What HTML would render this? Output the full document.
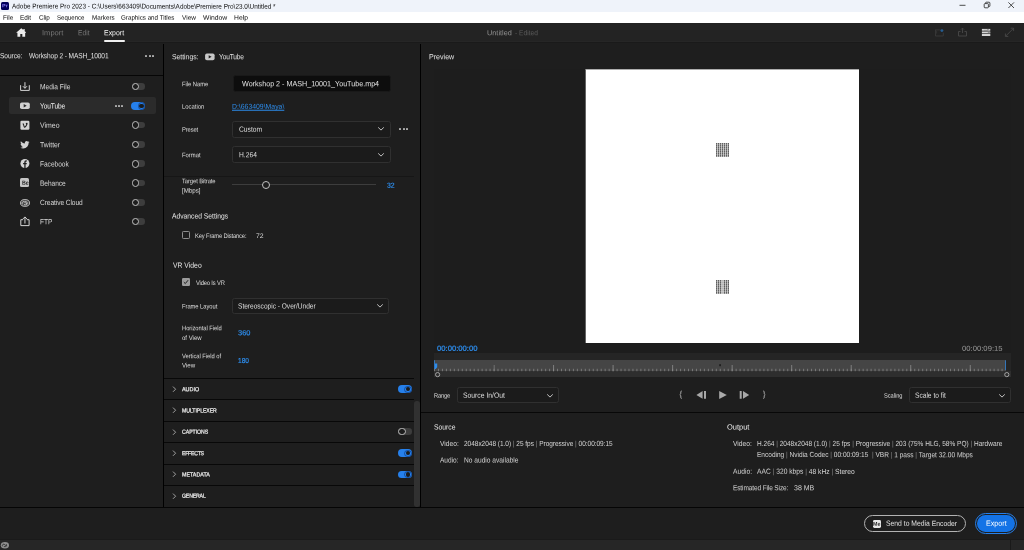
<!DOCTYPE html><html><head><meta charset="utf-8"><title>Adobe Premiere Pro 2023 - Export</title><style>
html,body{margin:0;padding:0;background:#1e1e1e;}
body{width:1024px;height:550px;overflow:hidden;position:relative;font-family:"Liberation Sans",sans-serif;}
.a{position:absolute;}
.t{position:absolute;white-space:pre;line-height:12px;height:12px;transform-origin:0 50%;}
.t i{font-style:normal;opacity:.55;}
.dd{position:absolute;box-sizing:border-box;border:1px solid #303030;border-radius:2.5px;background:#1b1b1b;}
#tx{position:absolute;left:0;top:0;width:1024px;height:550px;will-change:transform;}
.hl{position:absolute;height:1px;background:#080808;}
</style></head><body>
<!-- window chrome -->
<div class="a" style="left:0;top:0;width:1024px;height:12px;background:#eff3fa;"></div>
<div class="a" style="left:0;top:12px;width:1024px;height:11px;background:#ffffff;"></div>
<div class="a" style="left:0.75px;top:1.6px;width:8.35px;height:8.3px;background:#00005b;border-radius:1.5px;"></div>
<svg class="a" style="left:955px;top:0" width="69" height="12" viewBox="0 0 69 12">
<path d="M4.5 5.3h6" stroke="#222" stroke-width="0.8" fill="none"/>
<rect x="29.2" y="3.6" width="4.2" height="4.2" rx="0.8" stroke="#222" stroke-width="0.8" fill="none"/>
<path d="M30.6 3.4v-0.6q0-0.6 0.6-0.6h2.8q0.9 0 0.9 0.9v2.8q0 0.6-0.6 0.6h-0.6" stroke="#222" stroke-width="0.8" fill="none"/>
<path d="M53.4 2.4l5.6 5.6M59 2.4l-5.6 5.6" stroke="#222" stroke-width="0.8" fill="none"/>
</svg>
<!-- nav bar -->
<div class="a" style="left:0;top:23px;width:1024px;height:19px;background:#232323;"></div>
<div class="a" style="left:0;top:41px;width:1024px;height:1px;background:#262626;"></div><div class="a" style="left:0;top:42px;width:1024px;height:1px;background:#1a1a1a;"></div>
<div class="a" style="left:104.2px;top:40.3px;width:21.3px;height:1.6px;background:#f0f0f0;border-radius:1px;"></div>
<svg class="a" style="left:15.6px;top:28.4px" width="10.6" height="9" viewBox="0 0 26 22"><path d="M13 0.300L0.300 11.500h3.200V21.700h7v-7.200h5v7.200h7V11.500h3.200L21.300 7.800V2.300h-3.200v2.600z" fill="#ececec"/></svg>
<!-- panels -->
<div class="a" style="left:0;top:75px;width:163px;height:1px;background:#060606;"></div>
<div class="a" style="left:163px;top:44px;width:1px;height:464px;background:#000;"></div>
<div class="a" style="left:420px;top:44px;width:1px;height:464px;background:#000;"></div>
<div class="a" style="left:0;top:507px;width:1024px;height:1px;background:#050505;"></div>
<div class="a" style="left:0;top:539px;width:1024px;height:1px;background:#1a1a1a;"></div><div class="a" style="left:0;top:540px;width:1024px;height:10px;background:#262626;"></div>
<div class="a" style="left:1010.3px;top:540px;width:1px;height:10px;background:#1a1a1a;"></div>
<!-- selected row -->
<div class="a" style="left:9.3px;top:97.2px;width:146.7px;height:16.8px;background:#2b2b2b;border-radius:2px;"></div>
<!-- preview -->
<div class="a" style="left:433.5px;top:69px;width:577px;height:284px;background:#1d1d1d;"></div>
<div class="a" style="left:585px;top:69px;width:274px;height:274px;background:#767676;"></div><div class="a" style="left:586px;top:69px;width:273px;height:1px;background:#aeaeae;"></div><div class="a" style="left:585px;top:70px;width:1px;height:273px;background:#646464;"></div><div class="a" style="left:586px;top:70px;width:273px;height:273px;background:#ffffff;"></div>
<div class="a" style="left:715.5px;top:143.1px;width:13.8px;height:13.9px;background:repeating-linear-gradient(0deg,rgba(255,255,255,.22) 0,rgba(255,255,255,.22) 0.7px,rgba(255,255,255,0) 0.7px,rgba(255,255,255,0) 2px),repeating-linear-gradient(90deg,#606060 0,#606060 1.15px,#bcbcbc 1.15px,#bcbcbc 2px);"></div>
<div class="a" style="left:715.5px;top:279.6px;width:13.8px;height:14.1px;background:linear-gradient(90deg,rgba(255,255,255,0) 5.6px,rgba(255,255,255,.55) 5.6px,rgba(255,255,255,.55) 6.6px,rgba(255,255,255,0) 6.6px),repeating-linear-gradient(0deg,rgba(255,255,255,.22) 0,rgba(255,255,255,.22) 0.7px,rgba(255,255,255,0) 0.7px,rgba(255,255,255,0) 2px),repeating-linear-gradient(90deg,#606060 0,#606060 1.15px,#bcbcbc 1.15px,#bcbcbc 2px);"></div>
<!-- timeline -->
<div class="a" style="left:434px;top:353px;width:577px;height:24px;background:#252525;"></div>
<div class="a" style="left:434px;top:371px;width:577px;height:6px;background:#2e2e2e;"></div>
<div class="a" style="left:434px;top:360px;width:571.7px;height:11.2px;background:#454545;"></div>
<svg class="a" style="left:434px;top:360px" width="572" height="12" viewBox="0 0 572 12">
<defs><pattern id="mt" x="0" y="0" width="3.969" height="12" patternUnits="userSpaceOnUse"><rect x="0" y="8.8" width="0.8" height="2.4" fill="#848484"/></pattern>
<pattern id="MT" x="0" y="0" width="59.53" height="12" patternUnits="userSpaceOnUse"><rect x="0" y="5" width="0.8" height="6.2" fill="#8c8c8c"/></pattern></defs>
<rect x="0" y="0" width="571.4" height="12" fill="url(#mt)"/><rect x="59.53" y="0" width="512" height="12" fill="url(#MT)"/>
<rect x="285.2" y="4.2" width="1.8" height="2" fill="#1f1f1f"/>
</svg>
<svg class="a" style="left:432px;top:358px" width="10" height="24" viewBox="0 0 10 24">
<path d="M2.3 2.3h0.7v3.2h2.2v3.8l-1.5 1.6h-1.4z" fill="#2d8ceb"/>
<circle cx="5.6" cy="16.6" r="2.1" fill="none" stroke="#bdbdbd" stroke-width="0.8"/>
</svg>
<svg class="a" style="left:1000px;top:358px" width="12" height="24" viewBox="0 0 12 24">
<rect x="5.2" y="2.3" width="0.7" height="9.8" fill="#2d8ceb"/>
<circle cx="6.8" cy="16.6" r="2.1" fill="none" stroke="#bdbdbd" stroke-width="0.8"/>
</svg>
<!-- dropdowns -->
<div class="dd" style="left:232.2px;top:120.5px;width:158.6px;height:17.1px;"></div>
<div class="dd" style="left:232.2px;top:146.4px;width:158.6px;height:16.8px;"></div>
<div class="dd" style="left:231.8px;top:297.7px;width:157.6px;height:16.6px;"></div>
<div class="dd" style="left:457.2px;top:386.7px;width:101.6px;height:16.7px;"></div>
<div class="dd" style="left:908.6px;top:386.7px;width:102.3px;height:16.7px;"></div>
<div class="a" style="left:232.6px;top:75.4px;width:158px;height:16.5px;background:#0d0d0d;border-radius:2.5px;border:1px solid #191919;box-sizing:border-box;"></div>
<!-- lines -->
<div class="a" style="left:164px;top:175.6px;width:250px;height:1.4px;background:#161616;"></div>
<div class="hl" style="left:164px;top:378px;width:250px;"></div>
<div class="hl" style="left:164px;top:399px;width:250px;"></div>
<div class="hl" style="left:164px;top:421px;width:250px;"></div>
<div class="hl" style="left:164px;top:442px;width:250px;"></div>
<div class="hl" style="left:164px;top:464px;width:250px;"></div>
<div class="hl" style="left:164px;top:485px;width:250px;"></div>
<div class="hl" style="left:421px;top:412px;width:603px;"></div>
<div class="a" style="left:414.4px;top:400.5px;width:5.4px;height:106px;background:#313131;border-radius:2.7px;"></div>
<!-- dots -->
<div class="a" style="left:145.00px;top:54.70px;width:2.0px;height:2.0px;background:#acacac;margin-left:0.3px;border-radius:0.6px;"></div><div class="a" style="left:148.40px;top:54.70px;width:2.0px;height:2.0px;background:#acacac;margin-left:0.3px;border-radius:0.6px;"></div><div class="a" style="left:151.80px;top:54.70px;width:2.0px;height:2.0px;background:#acacac;margin-left:0.3px;border-radius:0.6px;"></div>
<div class="a" style="left:114.40px;top:105.00px;width:2.0px;height:2.0px;background:#acacac;margin-left:0.3px;border-radius:0.6px;"></div><div class="a" style="left:117.80px;top:105.00px;width:2.0px;height:2.0px;background:#acacac;margin-left:0.3px;border-radius:0.6px;"></div><div class="a" style="left:121.20px;top:105.00px;width:2.0px;height:2.0px;background:#acacac;margin-left:0.3px;border-radius:0.6px;"></div>
<div class="a" style="left:399.10px;top:128.20px;width:2.0px;height:2.0px;background:#acacac;margin-left:0.3px;border-radius:0.6px;"></div><div class="a" style="left:402.50px;top:128.20px;width:2.0px;height:2.0px;background:#acacac;margin-left:0.3px;border-radius:0.6px;"></div><div class="a" style="left:405.90px;top:128.20px;width:2.0px;height:2.0px;background:#acacac;margin-left:0.3px;border-radius:0.6px;"></div>
<!-- toggles -->
<div class="a" style="left:131.60px;top:83.60px;width:13.6px;height:6.6px;border-radius:3.3px;background:#3d3d3d;margin-top:-0.25px;"></div><div class="a" style="left:131.40px;top:83.00px;width:7.6px;height:7.6px;box-sizing:border-box;border:0.85px solid #bcbcbc;border-radius:50%;background:#1d1d1d;margin:-0.15px 0 0 0.2px;"></div>
<div class="a" style="left:131.40px;top:102.20px;width:14px;height:7.8px;border-radius:3.9px;background:#2680eb;"></div><div class="a" style="left:137.80px;top:102.40px;width:7.4px;height:7.4px;box-sizing:border-box;border:0.8px solid rgba(8,40,100,.55);border-radius:50%;"></div><div class="a" style="left:139.20px;top:103.80px;width:4.6px;height:4.6px;border-radius:50%;background:#1b1b1b;"></div>
<div class="a" style="left:131.60px;top:122.10px;width:13.6px;height:6.6px;border-radius:3.3px;background:#3d3d3d;margin-top:-0.25px;"></div><div class="a" style="left:131.40px;top:121.50px;width:7.6px;height:7.6px;box-sizing:border-box;border:0.85px solid #bcbcbc;border-radius:50%;background:#1d1d1d;margin:-0.15px 0 0 0.2px;"></div>
<div class="a" style="left:131.60px;top:141.40px;width:13.6px;height:6.6px;border-radius:3.3px;background:#3d3d3d;margin-top:-0.25px;"></div><div class="a" style="left:131.40px;top:140.80px;width:7.6px;height:7.6px;box-sizing:border-box;border:0.85px solid #bcbcbc;border-radius:50%;background:#1d1d1d;margin:-0.15px 0 0 0.2px;"></div>
<div class="a" style="left:131.60px;top:160.70px;width:13.6px;height:6.6px;border-radius:3.3px;background:#3d3d3d;margin-top:-0.25px;"></div><div class="a" style="left:131.40px;top:160.10px;width:7.6px;height:7.6px;box-sizing:border-box;border:0.85px solid #bcbcbc;border-radius:50%;background:#1d1d1d;margin:-0.15px 0 0 0.2px;"></div>
<div class="a" style="left:131.60px;top:180.00px;width:13.6px;height:6.6px;border-radius:3.3px;background:#3d3d3d;margin-top:-0.25px;"></div><div class="a" style="left:131.40px;top:179.40px;width:7.6px;height:7.6px;box-sizing:border-box;border:0.85px solid #bcbcbc;border-radius:50%;background:#1d1d1d;margin:-0.15px 0 0 0.2px;"></div>
<div class="a" style="left:131.60px;top:199.30px;width:13.6px;height:6.6px;border-radius:3.3px;background:#3d3d3d;margin-top:-0.25px;"></div><div class="a" style="left:131.40px;top:198.70px;width:7.6px;height:7.6px;box-sizing:border-box;border:0.85px solid #bcbcbc;border-radius:50%;background:#1d1d1d;margin:-0.15px 0 0 0.2px;"></div>
<div class="a" style="left:131.60px;top:218.50px;width:13.6px;height:6.6px;border-radius:3.3px;background:#3d3d3d;margin-top:-0.25px;"></div><div class="a" style="left:131.40px;top:217.90px;width:7.6px;height:7.6px;box-sizing:border-box;border:0.85px solid #bcbcbc;border-radius:50%;background:#1d1d1d;margin:-0.15px 0 0 0.2px;"></div>
<div class="a" style="left:398.00px;top:385.30px;width:14px;height:7.8px;border-radius:3.9px;background:#2680eb;"></div><div class="a" style="left:404.40px;top:385.50px;width:7.4px;height:7.4px;box-sizing:border-box;border:0.8px solid rgba(8,40,100,.55);border-radius:50%;"></div><div class="a" style="left:405.80px;top:386.90px;width:4.6px;height:4.6px;border-radius:50%;background:#1b1b1b;"></div>
<div class="a" style="left:398.20px;top:428.60px;width:13.6px;height:6.6px;border-radius:3.3px;background:#3d3d3d;margin-top:-0.25px;"></div><div class="a" style="left:398.00px;top:428.00px;width:7.6px;height:7.6px;box-sizing:border-box;border:0.85px solid #bcbcbc;border-radius:50%;background:#1d1d1d;margin:-0.15px 0 0 0.2px;"></div>
<div class="a" style="left:398.00px;top:449.30px;width:14px;height:7.8px;border-radius:3.9px;background:#2680eb;"></div><div class="a" style="left:404.40px;top:449.50px;width:7.4px;height:7.4px;box-sizing:border-box;border:0.8px solid rgba(8,40,100,.55);border-radius:50%;"></div><div class="a" style="left:405.80px;top:450.90px;width:4.6px;height:4.6px;border-radius:50%;background:#1b1b1b;"></div>
<div class="a" style="left:398.00px;top:470.60px;width:14px;height:7.8px;border-radius:3.9px;background:#2680eb;"></div><div class="a" style="left:404.40px;top:470.80px;width:7.4px;height:7.4px;box-sizing:border-box;border:0.8px solid rgba(8,40,100,.55);border-radius:50%;"></div><div class="a" style="left:405.80px;top:472.20px;width:4.6px;height:4.6px;border-radius:50%;background:#1b1b1b;"></div>
<!-- chevrons -->
<svg class="a" style="left:377.00px;top:126.40px" width="8" height="6" viewBox="0 0 8 6"><path d="M1.2 1.4L4 4.1L6.8 1.4" fill="none" stroke="#cacaca" stroke-width="0.95"/></svg>
<svg class="a" style="left:377.00px;top:152.10px" width="8" height="6" viewBox="0 0 8 6"><path d="M1.2 1.4L4 4.1L6.8 1.4" fill="none" stroke="#cacaca" stroke-width="0.95"/></svg>
<svg class="a" style="left:376.00px;top:303.30px" width="8" height="6" viewBox="0 0 8 6"><path d="M1.2 1.4L4 4.1L6.8 1.4" fill="none" stroke="#cacaca" stroke-width="0.95"/></svg>
<svg class="a" style="left:545.50px;top:392.50px" width="8" height="6" viewBox="0 0 8 6"><path d="M1.2 1.4L4 4.1L6.8 1.4" fill="none" stroke="#cacaca" stroke-width="0.95"/></svg>
<svg class="a" style="left:997.50px;top:392.50px" width="8" height="6" viewBox="0 0 8 6"><path d="M1.2 1.4L4 4.1L6.8 1.4" fill="none" stroke="#cacaca" stroke-width="0.95"/></svg>
<svg class="a" style="left:172px;top:385.10px" width="5" height="8" viewBox="0 0 5 8"><path d="M1 1.6L3.6 4.2L1 6.8" fill="none" stroke="#a8a8a8" stroke-width="0.95"/></svg>
<svg class="a" style="left:172px;top:406.40px" width="5" height="8" viewBox="0 0 5 8"><path d="M1 1.6L3.6 4.2L1 6.8" fill="none" stroke="#a8a8a8" stroke-width="0.95"/></svg>
<svg class="a" style="left:172px;top:427.70px" width="5" height="8" viewBox="0 0 5 8"><path d="M1 1.6L3.6 4.2L1 6.8" fill="none" stroke="#a8a8a8" stroke-width="0.95"/></svg>
<svg class="a" style="left:172px;top:449.10px" width="5" height="8" viewBox="0 0 5 8"><path d="M1 1.6L3.6 4.2L1 6.8" fill="none" stroke="#a8a8a8" stroke-width="0.95"/></svg>
<svg class="a" style="left:172px;top:470.40px" width="5" height="8" viewBox="0 0 5 8"><path d="M1 1.6L3.6 4.2L1 6.8" fill="none" stroke="#a8a8a8" stroke-width="0.95"/></svg>
<svg class="a" style="left:172px;top:491.70px" width="5" height="8" viewBox="0 0 5 8"><path d="M1 1.6L3.6 4.2L1 6.8" fill="none" stroke="#a8a8a8" stroke-width="0.95"/></svg>
<div class="a" style="left:182px;top:231.1px;width:7.8px;height:7.8px;box-sizing:border-box;border:0.9px solid #8e8e8e;border-radius:1.3px;"></div>
<div class="a" style="left:182px;top:278px;width:7.8px;height:7.9px;border-radius:1.2px;background:#9c9c9c;"></div>
<svg class="a" style="left:182px;top:278px" width="7.8" height="7.9" viewBox="0 0 7.8 7.9"><path d="M1.8 4.1L3.3 5.6L6.1 2.2" fill="none" stroke="#1d1d1d" stroke-width="1"/></svg>
<div class="a" style="left:231.5px;top:184.2px;width:144.3px;height:0.9px;background:#3d3d3d;"></div>
<div class="a" style="left:261.8px;top:181.1px;width:8px;height:8px;box-sizing:border-box;border:0.9px solid #c2c2c2;border-radius:50%;background:#1e1e1e;"></div>
<!-- list icons -->
<svg class="a" style="left:19px;top:81.4px" width="12" height="11" viewBox="0 0 12 11"><path d="M1.6 4.2v5.2h8.7V4.2" fill="none" stroke="#d4d4d4" stroke-width="1"/><path d="M5.95 1.2v6M3.9 5.2l2.05 2.1L8 5.2" fill="none" stroke="#d4d4d4" stroke-width="1"/></svg>
<svg class="a" style="left:19px;top:101px" width="12" height="10" viewBox="0 0 12 10"><rect x="1" y="1.5" width="9.8" height="6.5" rx="1.8" fill="#d2d2d2"/><path d="M4.7 3.1v3.3l3-1.65z" fill="#2b2b2b"/></svg>
<svg class="a" style="left:19px;top:119px" width="12" height="12" viewBox="0 0 12 12"><rect x="1.4" y="1.7" width="9" height="9" rx="1.2" fill="#d4d4d4"/><path d="M3.3 4.9l0.9-0.6q0.7 0 1 1.6q0.3 1.5 0.6 1.5q0.5 0 1.3-1.7q0.3-0.9-0.5-0.7q0.4-1.4 1.5-1.3q0.9 0.1 0.3 1.7q-1.1 2.6-2.6 3.3q-1 0.3-1.4-1.6q-0.3-1.7-0.6-1.9z" fill="#1e1e1e"/></svg>
<svg class="a" style="left:19px;top:139px" width="12" height="11" viewBox="0 0 12 11"><path d="M10.4 3.0c-0.3 0.2-0.7 0.3-1 0.3c0.4-0.2 0.6-0.6 0.8-1c-0.4 0.2-0.7 0.3-1.2 0.4c-0.3-0.4-0.8-0.6-1.3-0.6c-1 0-1.9 0.9-1.9 1.9c0 0.1 0 0.3 0 0.4C4.200 4.300 2.800 3.500 1.900 2.300c-0.200 0.300-0.300 0.600-0.300 1.000c0 0.700 0.300 1.200 0.800 1.600c-0.300 0-0.600-0.100-0.800-0.200c0 0.900 0.600 1.700 1.500 1.900c-0.300 0.100-0.600 0.100-0.900 0c0.200 0.800 1.000 1.300 1.800 1.300c-0.700 0.600-1.700 0.900-2.700 0.800c0.800 0.500 1.800 0.800 2.900 0.800c3.500 0 5.400-2.900 5.400-5.400v-0.200c0.400-0.300 0.700-0.600 0.900-1z" fill="#d4d4d4"/></svg>
<svg class="a" style="left:19px;top:158px" width="12" height="11" viewBox="0 0 12 11"><circle cx="5.9" cy="5.5" r="4.5" fill="#d4d4d4"/><path d="M5.3 10V6.300H4.100V4.900H5.300V3.900q0-1.600 1.700-1.600l0.900 0.100V3.600H7.300q-0.700 0-0.700 0.600V4.900H7.800L7.600 6.300H6.600V10z" fill="#1e1e1e"/></svg>
<div class="a" style="left:20.4px;top:178.2px;width:9px;height:8.9px;background:#c6c6c6;border-radius:1.5px;"></div>
<svg class="a" style="left:19px;top:197px" width="13" height="12" viewBox="0 0 13 12"><ellipse cx="6" cy="5.95" rx="4.55" ry="3.4" fill="#4a4a4a" stroke="#c4c4c4" stroke-width="0.9"/><path d="M3.4 7.3q-1.100-1.500 0.400-2.500q1.200-0.600 2.200 0.400l1.900 1.900M5 7.600q1.700 0.700 2.900-0.400q0.900-1.300-0.300-2.400q-0.800-0.600-1.700-0.300" fill="none" stroke="#d0d0d0" stroke-width="0.85"/></svg>
<svg class="a" style="left:19px;top:215px" width="12" height="12" viewBox="0 0 12 12"><path d="M4.100 4.700H1.800v5.900h8.300V4.700H7.800" fill="none" stroke="#d4d4d4" stroke-width="1"/><path d="M5.950 8.500V2.200M4 3.900l1.950-2L7.900 3.900" fill="none" stroke="#d4d4d4" stroke-width="1"/></svg>
<!-- settings header youtube icon -->
<svg class="a" style="left:203.600px;top:52px" width="12" height="10" viewBox="0 0 12 10"><rect x="1.100" y="1.500" width="9.500" height="6.700" rx="1.800" fill="#c8c8c8"/><path d="M4.700 3.200v3.300l2.900-1.650z" fill="#1e1e1e"/></svg>
<!-- nav right icons -->
<svg class="a" style="left:933px;top:26px" width="84" height="13" viewBox="0 0 84 13">
<path d="M2.500 3.900h4.300M10.300 6.600v3.400h-7.800v-6.400" fill="none" stroke="#3a3a3a" stroke-width="0.900"/><rect x="2.900" y="4.600" width="1.200" height="3" fill="#303030"/><circle cx="8.900" cy="4.600" r="1.450" fill="#265d91"/>
<path d="M27.500 5.500h-2v4.500h8V5.500h-2" fill="none" stroke="#484848" stroke-width="0.900"/><path d="M29.500 7V2.200M28 3.600l1.500-1.500L31 3.600" fill="none" stroke="#484848" stroke-width="0.900"/>
<rect x="48.900" y="2.900" width="8.400" height="1.800" fill="#d4d4d4"/><rect x="48.900" y="5.500" width="8.400" height="1.700" fill="#d4d4d4"/><rect x="48.900" y="7.800" width="8.400" height="2.200" fill="#d4d4d4"/><rect x="54.500" y="2.900" width="1" height="0.800" fill="#444"/><rect x="51" y="3.900" width="4" height="0.500" fill="#777"/><rect x="54.800" y="6.100" width="2" height="0.600" fill="#666"/>
<path d="M72.500 10.300l8-8M77.700 2.200h2.900v2.900M72.400 7.500v2.900h2.900" fill="none" stroke="#484848" stroke-width="0.900"/>
</svg>
<!-- transport -->
<svg class="a" style="left:676px;top:388px" width="94" height="14" viewBox="0 0 94 14">
<path d="M5.900 3.100h-0.500q-0.600 0-0.600 0.600v2.100l-1 0.900l1 0.900v2.100q0 0.600 0.600 0.600h0.500" fill="none" stroke="#a6a6a6" stroke-width="1" stroke-linejoin="miter"/>
<path d="M26.600 3v7.800L20.400 6.900zM28 3.100h2v7.700h-2z" fill="#a8a8a8"/>
<path d="M43.200 2.900v8l7.600-4z" fill="#aaaaaa"/>
<path d="M63.700 3.100h2v7.700h-2zM67 3v7.800l6.200-3.900z" fill="#a8a8a8"/>
<path d="M87.100 3.100h0.500q0.600 0 0.600 0.600v2.100l1 0.900l-1 0.900v2.100q0 0.600-0.600 0.600h-0.500" fill="none" stroke="#a6a6a6" stroke-width="1" stroke-linejoin="miter"/>
</svg>
<!-- bottom buttons -->
<div class="a" style="left:863.700px;top:515px;width:102.300px;height:17.200px;box-sizing:border-box;border:1px solid #b2b2b2;border-radius:9px;"></div>
<div class="a" style="left:872.600px;top:519.800px;width:8.800px;height:7.800px;background:#e8e8e8;border-radius:1.400px;"></div>
<div class="a" style="left:974.800px;top:512.800px;width:42.300px;height:21.600px;box-sizing:border-box;border:0.900px solid #2680eb;border-radius:11px;"></div>
<div class="a" style="left:976.700px;top:514.700px;width:38.600px;height:17.800px;background:#1473e6;border-radius:9px;"></div>
<!-- status icon -->
<svg class="a" style="left:0px;top:540px" width="11" height="10" viewBox="0 0 11 10"><ellipse cx="4.9" cy="5.2" rx="4.1" ry="3.3" fill="#8e8e8e"/><path d="M2.600 6.300q-0.800-1.200 0.400-2q1-0.500 1.800 0.300l1.600 1.600M3.900 6.500q1.400 0.600 2.500-0.400q0.700-1.100-0.300-2" fill="none" stroke="#2a2a2a" stroke-width="0.800"/></svg>

<div id="tx">
<span class="t" id="t0" style="left:12.30px;top:0px;font-size:7.00px;color:#0c0c0c;transform:translateY(0.55px) scaleX(0.9142) rotate(0.03deg);">Adobe Premiere Pro 2023 - C:\Users\663409\Documents\Adobe\Premiere Pro\23.0\Untitled *</span>
<span class="t" id="t1" style="left:3.10px;top:11px;font-size:6.60px;color:#0a0a0a;transform:translateY(0.70px) scaleX(0.9600) rotate(0.03deg);">File</span>
<span class="t" id="t2" style="left:20.20px;top:11px;font-size:6.60px;color:#0a0a0a;transform:translateY(0.70px) scaleX(0.9758) rotate(0.03deg);">Edit</span>
<span class="t" id="t3" style="left:38.70px;top:11px;font-size:6.60px;color:#0a0a0a;transform:translateY(0.70px) scaleX(0.9508) rotate(0.03deg);">Clip</span>
<span class="t" id="t4" style="left:56.90px;top:11px;font-size:6.60px;color:#0a0a0a;transform:translateY(0.70px) scaleX(0.9258) rotate(0.03deg);">Sequence</span>
<span class="t" id="t5" style="left:91.60px;top:11px;font-size:6.60px;color:#0a0a0a;transform:translateY(0.70px) scaleX(0.9491) rotate(0.03deg);">Markers</span>
<span class="t" id="t6" style="left:121.40px;top:11px;font-size:6.60px;color:#0a0a0a;transform:translateY(0.70px) scaleX(0.9441) rotate(0.03deg);">Graphics and Titles</span>
<span class="t" id="t7" style="left:181.70px;top:11px;font-size:6.60px;color:#0a0a0a;transform:translateY(0.70px) scaleX(0.9797) rotate(0.03deg);">View</span>
<span class="t" id="t8" style="left:202.50px;top:11px;font-size:6.60px;color:#0a0a0a;transform:translateY(0.70px) scaleX(1.0318) rotate(0.03deg);">Window</span>
<span class="t" id="t9" style="left:233.60px;top:11px;font-size:6.60px;color:#0a0a0a;transform:translateY(0.70px) scaleX(1.0249) rotate(0.03deg);">Help</span>
<span class="t" id="t10" style="left:42.40px;top:27px;font-size:7.50px;color:#767676;transform:translateY(0.15px) scaleX(1.0063) rotate(0.03deg);">Import</span>
<span class="t" id="t11" style="left:78.30px;top:27px;font-size:7.50px;color:#767676;transform:translateY(0.15px) scaleX(0.8966) rotate(0.03deg);">Edit</span>
<span class="t" id="t12" style="left:104.40px;top:27px;font-size:7.50px;color:#f2f2f2;transform:translateY(0.15px) scaleX(0.9268) rotate(0.03deg);">Export</span>
<span class="t" id="t13" style="left:486.50px;top:27px;font-size:7.30px;color:#929292;transform:translateY(0.30px) scaleX(1.0020) rotate(0.03deg);">Untitled</span>
<span class="t" id="t14" style="left:514.80px;top:27px;font-size:7.30px;color:#5c5c5c;transform:translateY(0.30px) scaleX(0.9103) rotate(0.03deg);">- Edited</span>
<span class="t" id="t15" style="left:0.45px;top:50px;font-size:7.50px;color:#e4e4e4;letter-spacing:-0.058px;transform:translateY(0.25px) scaleX(0.8800) rotate(0.03deg);">Source:</span>
<span class="t" id="t16" style="left:29.10px;top:50px;font-size:7.50px;color:#e4e4e4;letter-spacing:-0.127px;transform:translateY(0.25px) scaleX(0.8800) rotate(0.03deg);">Workshop 2 - MASH_10001</span>
<span class="t" id="t17" style="left:172.10px;top:51px;font-size:7.50px;color:#e4e4e4;transform:translateY(0.25px) scaleX(0.9079) rotate(0.03deg);">Settings:</span>
<span class="t" id="t18" style="left:219.30px;top:51px;font-size:7.50px;color:#e4e4e4;letter-spacing:-0.179px;transform:translateY(0.25px) scaleX(0.8800) rotate(0.03deg);">YouTube</span>
<span class="t" id="t19" style="left:429.40px;top:51px;font-size:7.50px;color:#e4e4e4;transform:translateY(0.25px) scaleX(0.9443) rotate(0.03deg);">Preview</span>
<span class="t" id="t20" style="left:39.90px;top:81px;font-size:7.50px;color:#d8d8d8;letter-spacing:-0.007px;transform:translateY(0.15px) scaleX(0.8800) rotate(0.03deg);">Media File</span>
<span class="t" id="t21" style="left:39.90px;top:100px;font-size:7.50px;color:#f4f4f4;letter-spacing:-0.141px;transform:translateY(0.45px) scaleX(0.8800) rotate(0.03deg);">YouTube</span>
<span class="t" id="t22" style="left:39.90px;top:119px;font-size:7.50px;color:#d8d8d8;transform:translateY(0.75px) scaleX(0.9278) rotate(0.03deg);">Vimeo</span>
<span class="t" id="t23" style="left:39.90px;top:139px;font-size:7.50px;color:#d8d8d8;transform:translateY(0.35px) scaleX(0.9098) rotate(0.03deg);">Twitter</span>
<span class="t" id="t24" style="left:39.90px;top:158px;font-size:7.50px;color:#d8d8d8;letter-spacing:-0.046px;transform:translateY(0.45px) scaleX(0.8800) rotate(0.03deg);">Facebook</span>
<span class="t" id="t25" style="left:39.90px;top:177px;font-size:7.50px;color:#d8d8d8;letter-spacing:-0.067px;transform:translateY(0.75px) scaleX(0.8800) rotate(0.03deg);">Behance</span>
<span class="t" id="t26" style="left:39.90px;top:197px;font-size:7.50px;color:#d8d8d8;letter-spacing:-0.084px;transform:translateY(0.05px) scaleX(0.8800) rotate(0.03deg);">Creative Cloud</span>
<span class="t" id="t27" style="left:39.90px;top:216px;font-size:7.50px;color:#d8d8d8;letter-spacing:-0.040px;transform:translateY(0.15px) scaleX(0.8800) rotate(0.03deg);">FTP</span>
<span class="t" id="t28" style="left:181.70px;top:78px;font-size:6.60px;color:#dedede;letter-spacing:-0.034px;transform:translateY(0.15px) scaleX(0.8800) rotate(0.03deg);">File Name</span>
<span class="t" id="t29" style="left:181.70px;top:100px;font-size:6.60px;color:#dedede;transform:translateY(0.75px) scaleX(0.8982) rotate(0.03deg);">Location</span>
<span class="t" id="t30" style="left:181.70px;top:123px;font-size:6.60px;color:#dedede;letter-spacing:-0.131px;transform:translateY(0.75px) scaleX(0.8800) rotate(0.03deg);">Preset</span>
<span class="t" id="t31" style="left:181.70px;top:149px;font-size:6.60px;color:#dedede;transform:translateY(0.35px) scaleX(0.8904) rotate(0.03deg);">Format</span>
<span class="t" id="t32" style="left:181.70px;top:175px;font-size:6.60px;color:#dedede;letter-spacing:-0.080px;transform:translateY(0.25px) scaleX(0.8800) rotate(0.03deg);">Target Bitrate</span>
<span class="t" id="t33" style="left:181.70px;top:184px;font-size:6.60px;color:#dedede;transform:translateY(0.75px) scaleX(0.9395) rotate(0.03deg);">[Mbps]</span>
<span class="t" id="t34" style="left:195.40px;top:229px;font-size:6.60px;color:#dedede;letter-spacing:-0.169px;transform:translateY(0.95px) scaleX(0.8800) rotate(0.03deg);">Key Frame Distance:</span>
<span class="t" id="t35" style="left:255.50px;top:229px;font-size:6.60px;color:#dedede;transform:translateY(0.95px) scaleX(1.0349) rotate(0.03deg);">72</span>
<span class="t" id="t36" style="left:195.60px;top:276px;font-size:6.60px;color:#dedede;letter-spacing:-0.186px;transform:translateY(0.95px) scaleX(0.8800) rotate(0.03deg);">Video Is VR</span>
<span class="t" id="t37" style="left:181.70px;top:300px;font-size:6.60px;color:#dedede;letter-spacing:-0.052px;transform:translateY(0.55px) scaleX(0.8800) rotate(0.03deg);">Frame Layout</span>
<span class="t" id="t38" style="left:181.70px;top:322px;font-size:6.60px;color:#dedede;letter-spacing:-0.039px;transform:translateY(0.35px) scaleX(0.8800) rotate(0.03deg);">Horizontal Field</span>
<span class="t" id="t39" style="left:181.70px;top:331px;font-size:6.60px;color:#dedede;transform:translateY(0.95px) scaleX(0.9110) rotate(0.03deg);">of View</span>
<span class="t" id="t40" style="left:181.70px;top:350px;font-size:6.60px;color:#dedede;letter-spacing:-0.040px;transform:translateY(0.25px) scaleX(0.8800) rotate(0.03deg);">Vertical Field of</span>
<span class="t" id="t41" style="left:181.70px;top:359px;font-size:6.60px;color:#dedede;transform:translateY(0.55px) scaleX(0.9304) rotate(0.03deg);">View</span>
<span class="t" id="t42" style="left:172.10px;top:210px;font-size:7.50px;color:#e8e8e8;transform:translateY(0.55px) scaleX(0.8985) rotate(0.03deg);">Advanced Settings</span>
<span class="t" id="t43" style="left:172.50px;top:259px;font-size:7.50px;color:#e8e8e8;transform:translateY(0.65px) scaleX(0.9093) rotate(0.03deg);">VR Video</span>
<span class="t" id="t44" style="left:241.70px;top:78px;font-size:7.60px;color:#e4e4e4;transform:translateY(0.15px) scaleX(0.9432) rotate(0.03deg);">Workshop 2 - MASH_10001_YouTube.mp4</span>
<span class="t" id="t45" style="left:232.40px;top:100px;font-size:7.00px;color:#2d8ceb;transform:translateY(0.75px) scaleX(0.9810) rotate(0.03deg);text-decoration:underline;">D:\663409\Maya\</span>
<span class="t" id="t46" style="left:238.70px;top:123px;font-size:7.50px;color:#dedede;transform:translateY(0.65px) scaleX(0.8977) rotate(0.03deg);">Custom</span>
<span class="t" id="t47" style="left:238.70px;top:149px;font-size:7.50px;color:#dedede;transform:translateY(0.25px) scaleX(0.8943) rotate(0.03deg);">H.264</span>
<span class="t" id="t48" style="left:238.20px;top:300px;font-size:7.50px;color:#dedede;letter-spacing:-0.021px;transform:translateY(0.55px) scaleX(0.8800) rotate(0.03deg);">Stereoscopic - Over/Under</span>
<span class="t" id="t49" style="left:386.70px;top:179px;font-size:7.20px;color:#2d8ceb;transform:translateY(0.85px) scaleX(0.9500) rotate(0.03deg);-webkit-text-stroke:0.2px #2d8ceb;">32</span>
<span class="t" id="t50" style="left:237.70px;top:327px;font-size:7.20px;color:#2d8ceb;transform:translateY(0.15px) scaleX(1.0333) rotate(0.03deg);-webkit-text-stroke:0.2px #2d8ceb;">360</span>
<span class="t" id="t51" style="left:237.70px;top:354px;font-size:7.20px;color:#2d8ceb;transform:translateY(0.95px) scaleX(0.9083) rotate(0.03deg);-webkit-text-stroke:0.2px #2d8ceb;">180</span>
<span class="t" id="t52" style="left:181.70px;top:383px;font-size:5.90px;color:#f0f0f0;transform:translateY(0.20px) scaleX(0.9219) rotate(0.03deg);-webkit-text-stroke:0.22px #f0f0f0;">AUDIO</span>
<span class="t" id="t53" style="left:181.70px;top:404px;font-size:5.90px;color:#f0f0f0;letter-spacing:-0.094px;transform:translateY(0.50px) scaleX(0.8800) rotate(0.03deg);-webkit-text-stroke:0.22px #f0f0f0;">MULTIPLEXER</span>
<span class="t" id="t54" style="left:181.70px;top:425px;font-size:5.90px;color:#f0f0f0;letter-spacing:-0.034px;transform:translateY(0.80px) scaleX(0.8800) rotate(0.03deg);-webkit-text-stroke:0.22px #f0f0f0;">CAPTIONS</span>
<span class="t" id="t55" style="left:181.70px;top:447px;font-size:5.90px;color:#f0f0f0;letter-spacing:-0.307px;transform:translateY(0.20px) scaleX(0.8800) rotate(0.03deg);-webkit-text-stroke:0.22px #f0f0f0;">EFFECTS</span>
<span class="t" id="t56" style="left:181.70px;top:468px;font-size:5.90px;color:#f0f0f0;transform:translateY(0.50px) scaleX(0.9036) rotate(0.03deg);-webkit-text-stroke:0.22px #f0f0f0;">METADATA</span>
<span class="t" id="t57" style="left:181.70px;top:489px;font-size:5.90px;color:#f0f0f0;letter-spacing:-0.185px;transform:translateY(0.80px) scaleX(0.8800) rotate(0.03deg);-webkit-text-stroke:0.22px #f0f0f0;">GENERAL</span>
<span class="t" id="t58" style="left:437.10px;top:342px;font-size:7.20px;color:#2d8ceb;transform:translateY(0.85px) scaleX(1.0636) rotate(0.03deg);-webkit-text-stroke:0.25px #2d8ceb;">00:00:00:00</span>
<span class="t" id="t59" style="left:961.60px;top:342px;font-size:7.00px;color:#9a9a9a;transform:translateY(0.85px) scaleX(1.0978) rotate(0.03deg);">00:00:09:15</span>
<span class="t" id="t60" style="left:433.80px;top:389px;font-size:6.50px;color:#dedede;letter-spacing:-0.158px;transform:translateY(0.75px) scaleX(0.8800) rotate(0.03deg);">Range</span>
<span class="t" id="t61" style="left:462.80px;top:389px;font-size:7.50px;color:#dedede;transform:translateY(0.75px) scaleX(0.9053) rotate(0.03deg);">Source In/Out</span>
<span class="t" id="t62" style="left:884.00px;top:389px;font-size:6.50px;color:#dedede;letter-spacing:-0.051px;transform:translateY(0.75px) scaleX(0.8800) rotate(0.03deg);">Scaling</span>
<span class="t" id="t63" style="left:914.50px;top:389px;font-size:7.50px;color:#dedede;transform:translateY(0.75px) scaleX(0.8821) rotate(0.03deg);">Scale to fit</span>
<span class="t" id="t64" style="left:434.30px;top:421px;font-size:7.50px;color:#e8e8e8;transform:translateY(0.45px) scaleX(0.9005) rotate(0.03deg);">Source</span>
<span class="t" id="t65" style="left:727.30px;top:421px;font-size:7.50px;color:#e8e8e8;transform:translateY(0.45px) scaleX(0.9949) rotate(0.03deg);">Output</span>
<span class="t" id="t66" style="left:439.70px;top:437px;font-size:7.40px;color:#d4d4d4;transform:translateY(0.95px) scaleX(0.9026) rotate(0.03deg);">Video:</span>
<span class="t" id="t67" style="left:464.40px;top:437px;font-size:7.40px;color:#d4d4d4;letter-spacing:-0.023px;transform:translateY(0.95px) scaleX(0.8800) rotate(0.03deg);">2048x2048 (1.0) <i>|</i> 25 fps <i>|</i> Progressive <i>|</i> 00:00:09:15</span>
<span class="t" id="t68" style="left:439.70px;top:454px;font-size:7.40px;color:#d4d4d4;transform:translateY(0.55px) scaleX(0.8870) rotate(0.03deg);">Audio:</span>
<span class="t" id="t69" style="left:464.40px;top:454px;font-size:7.40px;color:#d4d4d4;transform:translateY(0.55px) scaleX(0.8962) rotate(0.03deg);">No audio available</span>
<span class="t" id="t70" style="left:732.80px;top:437px;font-size:7.40px;color:#d4d4d4;transform:translateY(0.95px) scaleX(0.9122) rotate(0.03deg);">Video:</span>
<span class="t" id="t71" style="left:757.40px;top:437px;font-size:7.40px;color:#d4d4d4;transform:translateY(0.95px) scaleX(0.8827) rotate(0.03deg);">H.264 <i>|</i> 2048x2048 (1.0) <i>|</i> 25 fps <i>|</i> Progressive <i>|</i> 203 (75% HLG, 58% PQ) <i>|</i> Hardware</span>
<span class="t" id="t72" style="left:757.40px;top:449px;font-size:7.40px;color:#d4d4d4;transform:translateY(0.05px) scaleX(0.8845) rotate(0.03deg);">Encoding <i>|</i> Nvidia Codec <i>|</i> 00:00:09:15  <i>|</i> VBR <i>|</i> 1 pass <i>|</i> Target 32.00 Mbps</span>
<span class="t" id="t73" style="left:732.80px;top:465px;font-size:7.40px;color:#d4d4d4;transform:translateY(0.85px) scaleX(0.9061) rotate(0.03deg);">Audio:</span>
<span class="t" id="t74" style="left:757.40px;top:465px;font-size:7.40px;color:#d4d4d4;transform:translateY(0.85px) scaleX(0.9049) rotate(0.03deg);">AAC <i>|</i> 320 kbps <i>|</i> 48 kHz <i>|</i> Stereo</span>
<span class="t" id="t75" style="left:732.80px;top:482px;font-size:7.40px;color:#d4d4d4;letter-spacing:-0.124px;transform:translateY(0.15px) scaleX(0.8800) rotate(0.03deg);">Estimated File Size:</span>
<span class="t" id="t76" style="left:793.80px;top:482px;font-size:7.40px;color:#d4d4d4;transform:translateY(0.15px) scaleX(0.9450) rotate(0.03deg);">38 MB</span>
<span class="t" id="t77" style="left:885.90px;top:517px;font-size:7.50px;color:#e0e0e0;transform:translateY(0.85px) scaleX(0.9057) rotate(0.03deg);">Send to Media Encoder</span>
<span class="t" id="t78" style="left:985.50px;top:517px;font-size:7.50px;color:#ffffff;transform:translateY(0.85px) scaleX(0.9545) rotate(0.03deg);">Export</span>
<span class="t" id="t79" style="left:2.00px;top:0px;font-size:4.60px;color:#8478f0;transform:translateY(0.15px) scaleX(1.1936) rotate(0.03deg);font-weight:bold;">Pr</span>
<span class="t" id="t80" style="left:873.40px;top:517px;font-size:5.60px;color:#1e1e1e;transform:translateY(0.85px) scaleX(0.9510) rotate(0.03deg);font-weight:bold;">Me</span>
<span class="t" id="t81" style="left:21.60px;top:176px;font-size:5.90px;color:#2a2a2a;transform:translateY(0.80px) scaleX(0.9029) rotate(0.03deg);font-weight:bold;">Be</span>
</div></body></html>
